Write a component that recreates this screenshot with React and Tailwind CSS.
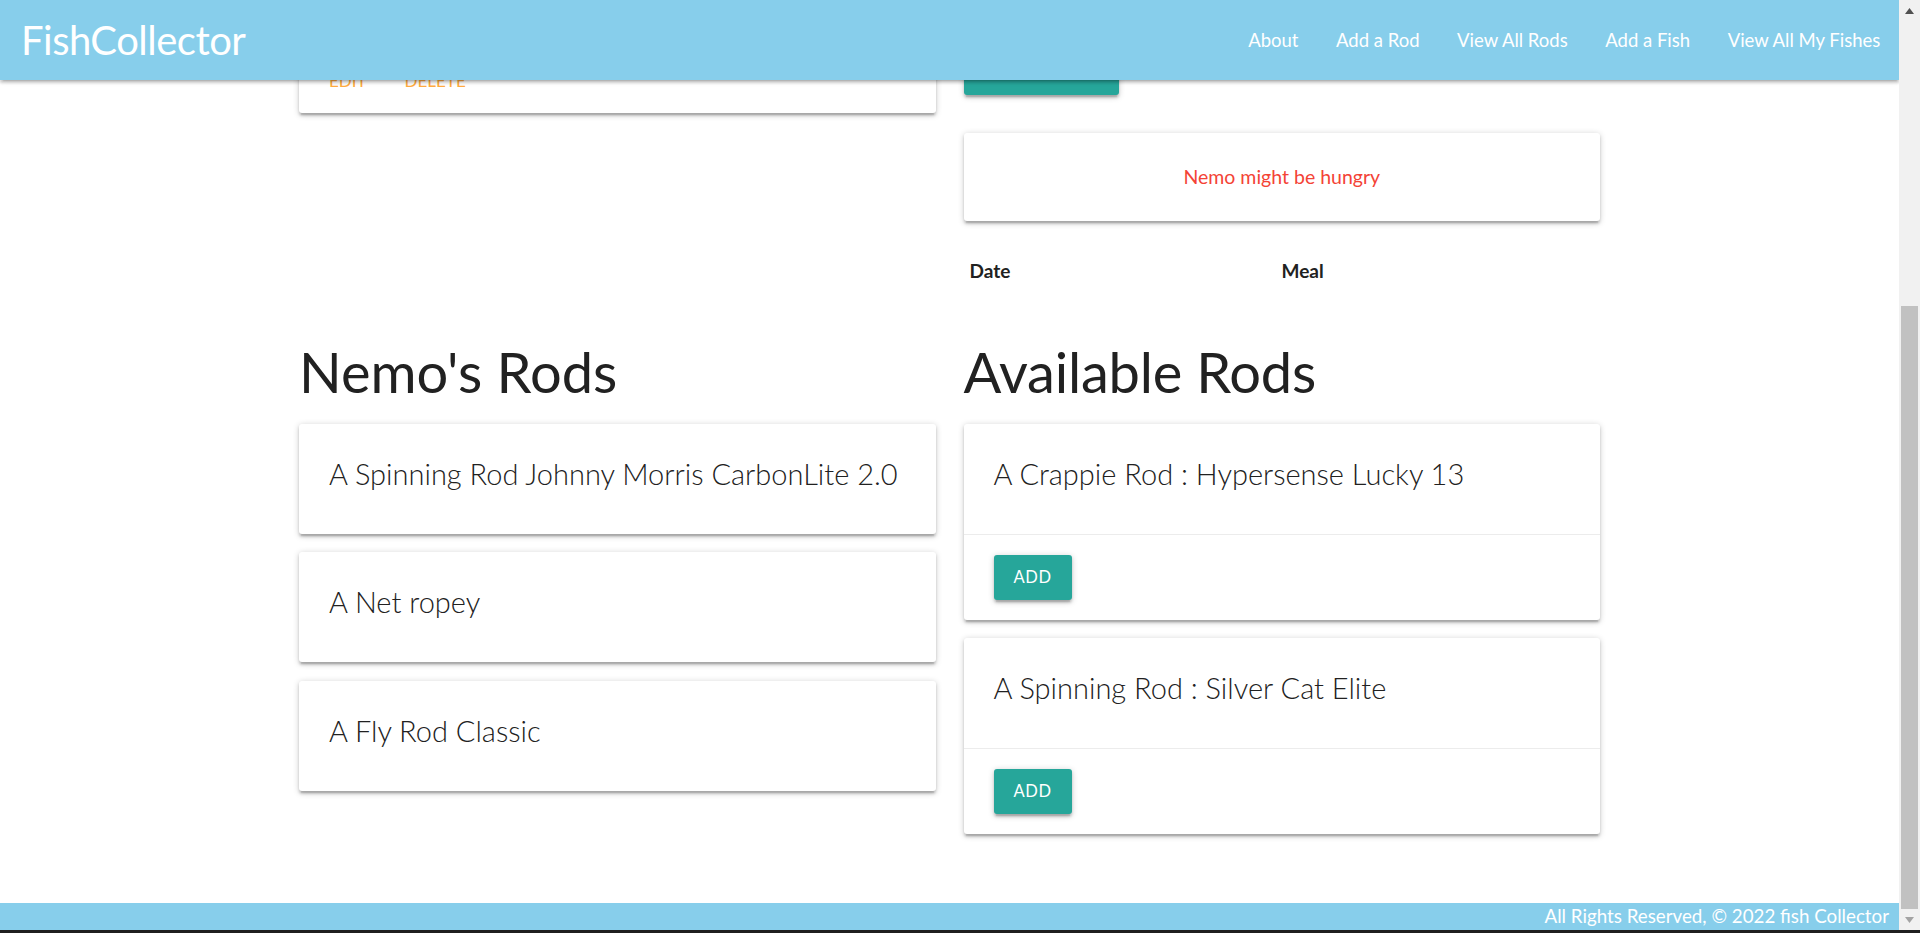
import React from 'react';

// material "z-depth-1" shadow, scaled for the 125% page zoom
const depth =
  'shadow-[0_2.5px_2.5px_0_rgba(0,0,0,0.14),0_3.75px_1.25px_-2.5px_rgba(0,0,0,0.12),0_1.25px_6.25px_0_rgba(0,0,0,0.2)]';

const navLinks = ['About', 'Add a Rod', 'View All Rods', 'Add a Fish', 'View All My Fishes'];
const nemoRods = ['A Spinning Rod Johnny Morris CarbonLite 2.0', 'A Net ropey', 'A Fly Rod Classic'];
const availableRods = ['A Crappie Rod : Hypersense Lucky 13', 'A Spinning Rod : Silver Cat Elite'];

function Navbar() {
  return (
    <nav className={`absolute inset-x-0 top-0 z-10 h-[80px] bg-[#87ceeb] flex justify-between text-white ${depth}`}>
      <a className="pl-[21px] text-[40px] leading-[80px] tracking-[-0.5px]">FishCollector</a>
      <ul className="flex">
        {navLinks.map((link) => (
          <li key={link} className="px-[18.75px] text-[18.5px] leading-[80px]">
            {link}
          </li>
        ))}
      </ul>
    </nav>
  );
}

function RodCard({ name, children }) {
  return (
    <div className={`bg-white rounded-[3px] ${depth}`}>
      <div className="px-[30px] pt-[30px] pb-[40px]">
        <span className="block text-[29px] leading-[40px] font-light whitespace-nowrap">{name}</span>
      </div>
      {children}
    </div>
  );
}

function Scrollbar() {
  return (
    <div className="w-[21px] bg-[#f1f1f1] flex flex-col">
      <div className="h-[21px] flex items-center justify-center">
        <svg width="9" height="6" viewBox="0 0 9 6">
          <polygon points="4.5,0 9,6 0,6" fill="#505050" />
        </svg>
      </div>
      <div className="flex-1 flex flex-col">
        <div className="mt-[285px] mx-[2px] h-[603px] bg-[#c1c1c1]" />
      </div>
      <div className="h-[21px] flex items-center justify-center">
        <svg width="9" height="6" viewBox="0 0 9 6">
          <polygon points="0,0 9,0 4.5,6" fill="#a3a3a3" />
        </svg>
      </div>
    </div>
  );
}

export default function App() {
  return (
    <div className="w-[1920px] h-[933px] flex flex-col overflow-hidden bg-white text-[#212121] font-['Lato','Open_Sans',sans-serif]">
      <div className="flex flex-1 min-h-0">
        <div className="relative flex-1 flex flex-col overflow-hidden">
          <Navbar />

          <main className="flex-1">
            <div className="w-[1329px] mx-auto">
              {/* top of the fish detail, scrolled mostly under the navbar */}
              <div className="flex items-start">
                <div className="w-1/2 px-[14px]">
                  <div className={`h-[113px] bg-white rounded-b-[3px] flex flex-col justify-end ${depth}`}>
                    <div className="border-t border-[rgba(160,160,160,0.2)] px-[30px] pt-[20px] pb-[18px] flex text-[17px] leading-[28px] uppercase text-[#ffab40]">
                      <a className="mr-[38px]">Edit</a>
                      <a>Delete</a>
                    </div>
                  </div>
                </div>
                <div className="w-1/2 px-[14px]">
                  <button className={`mt-[50px] block h-[45px] w-[155px] bg-[#26a69a] rounded-[3px] ${depth}`} />
                  <div className={`mt-[38px] h-[88px] bg-white rounded-[3px] flex items-center justify-center text-[19.5px] text-[#f44336] ${depth}`}>
                    Nemo might be hungry
                  </div>
                  <div className="mt-[17px] flex py-[18.75px] text-[19px] leading-[28px] font-bold">
                    <div className="w-[312px] px-[6px]">Date</div>
                    <div className="px-[6px]">Meal</div>
                  </div>
                </div>
              </div>

              {/* rods */}
              <div className="flex items-start">
                <div className="w-1/2 px-[14px]">
                  <h3 className="mt-[37px] mb-[21px] text-[56px] leading-[62px]">Nemo's Rods</h3>
                  <div className="flex flex-col gap-[18.75px]">
                    {nemoRods.map((rod) => (
                      <RodCard key={rod} name={rod} />
                    ))}
                  </div>
                </div>
                <div className="w-1/2 px-[14px]">
                  <h3 className="mt-[37px] mb-[21px] text-[56px] leading-[62px] tracking-[-0.2px]">Available Rods</h3>
                  <div className="flex flex-col gap-[18.75px]">
                    {availableRods.map((rod) => (
                      <RodCard key={rod} name={rod}>
                        <div className="border-t border-[rgba(160,160,160,0.2)] px-[30px] py-[20px]">
                          <button
                            className={`h-[45px] px-[20px] bg-[#26a69a] rounded-[3px] text-white text-[16.5px] leading-[45px] uppercase tracking-[0.6px] ${depth}`}
                          >
                            Add
                          </button>
                        </div>
                      </RodCard>
                    ))}
                  </div>
                </div>
              </div>
            </div>
          </main>

          <footer className="h-[27px] bg-[#87ceeb] flex items-center justify-end pr-[10px] text-white text-[18.75px]">
            All Rights Reserved, © 2022 fish Collector
          </footer>
        </div>
        <Scrollbar />
      </div>
      <div className="h-[3px] bg-[#1f1f1f]" />
    </div>
  );
}
